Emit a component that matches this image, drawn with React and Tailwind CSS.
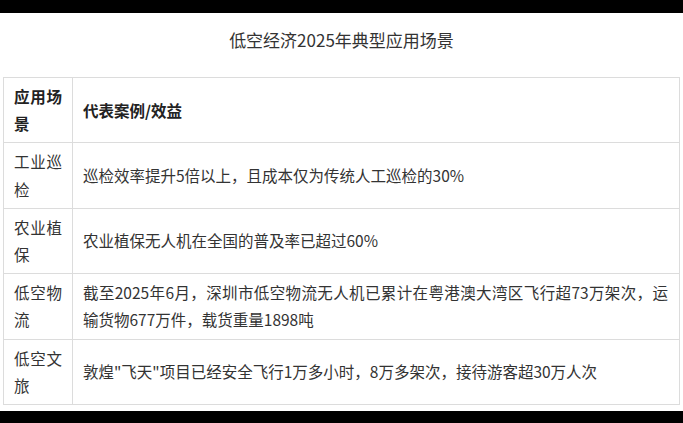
import React from 'react';

const rows = [
  { scene: '工业巡检', text: '巡检效率提升5倍以上，且成本仅为传统人工巡检的30%' },
  { scene: '农业植保', text: '农业植保无人机在全国的普及率已超过60%' },
  { scene: '低空物流', text: '截至2025年6月，深圳市低空物流无人机已累计在粤港澳大湾区飞行超73万架次，运输货物677万件，载货重量1898吨' },
  { scene: '低空文旅', text: '敦煌"飞天"项目已经安全飞行1万多小时，8万多架次，接待游客超30万人次' },
];

function Cell({ children, first, bold }) {
  return (
    <div
      className={
        'border-r border-b border-[#dcdcdc] py-[5px] flex items-center leading-[27.2px] ' +
        (first ? 'px-[10px]' : 'pl-[10px] pr-[11px]') +
        (bold ? ' font-bold text-[#222]' : ' text-[#333]')
      }
    >
      <div className="w-full text-justify">{children}</div>
    </div>
  );
}

export default function App() {
  return (
    <div
      className="w-[683px] h-[423px] flex flex-col bg-black"
      style={{ fontFamily: '"Noto Sans CJK SC", "Noto Sans", sans-serif' }}
    >
      <div className="h-[13px] shrink-0" />
      <div className="flex-1 bg-white flex flex-col">
        <h1 className="mt-[15px] text-center text-[17px] leading-[24px] text-[#333] font-normal">
          低空经济2025年典型应用场景
        </h1>

        <div className="mt-[25px] mx-[3px] grid grid-cols-[69px_1fr] border-l border-t border-[#dcdcdc] text-[15.5px]">
          <Cell first bold>应用场景</Cell>
          <Cell bold>代表案例/效益</Cell>
          {rows.map((r) => (
            <React.Fragment key={r.scene}>
              <Cell first>{r.scene}</Cell>
              <Cell>{r.text}</Cell>
            </React.Fragment>
          ))}
        </div>
      </div>
      <div className="h-[12px] shrink-0" />
    </div>
  );
}
